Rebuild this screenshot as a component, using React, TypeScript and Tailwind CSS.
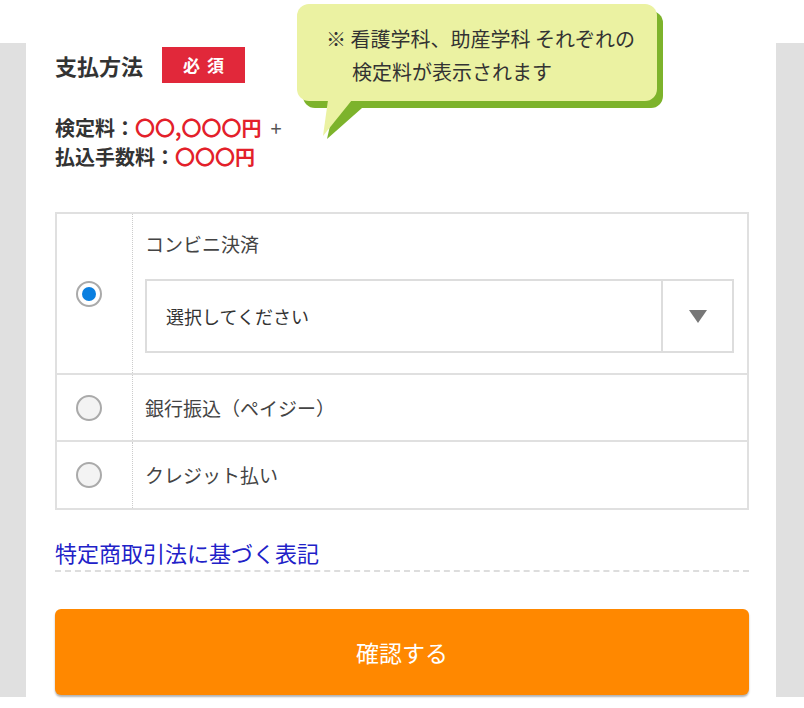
import React from "react";

const Radio = ({ checked }: { checked?: boolean }) => {
  return (
    <span
      className={
        "w-[26px] h-[26px] rounded-full border-2 border-[#aaaaaa] flex items-center justify-center " +
        (checked ? "bg-white" : "bg-[#f3f3f3]")
      }
    >
      {checked && <span className="w-[14px] h-[14px] rounded-full bg-[#0a7fe0]"></span>}
    </span>
  );
};

const Row = ({
  checked,
  label,
  className,
  children,
}: {
  checked?: boolean;
  label: string;
  className: string;
  children?: React.ReactNode;
}) => {
  return (
    <div className={"flex " + className}>
      <div className="w-[76px] shrink-0 flex items-center pl-[19px] border-r border-dotted border-[#cccccc]">
        <Radio checked={checked} />
      </div>
      <div className={"flex-1 pl-3 pr-[13px] flex flex-col " + (children ? "pt-[14px]" : "justify-center")}>
        <p className="text-[19px] leading-8 text-[#444444]">{label}</p>
        {children}
      </div>
    </div>
  );
};

const Bubble = () => {
  return (
    <div className="absolute left-[297px] top-[4px]">
      <div className="relative w-[360px] h-[97px] rounded-[12px] bg-[#ebf2a2] shadow-[6px_7px_0_#7db32b] pl-[29px] pt-[18px] text-[20px] leading-[33px] text-[#333333] z-10">
        <p>※ 看護学科、助産学科 それぞれの</p>
        <p className="pl-[26px]">検定料が表示されます</p>
      </div>
      <svg className="absolute left-[20px] top-[90px] z-20" width="48" height="50" viewBox="0 0 48 50">
        <polygon points="17,14 45,14 10,45" fill="#7db32b" />
        <polygon points="11,6 35,6 6,42" fill="#ebf2a2" />
      </svg>
    </div>
  );
};

export default function App() {
  return (
    <div className="relative w-full min-h-[708px] bg-white font-['Noto_Sans_CJK_JP','Noto_Sans',sans-serif]">
      <div className="h-[43px]"></div>
      <div className="flex bg-[#e0e0e0]">
        <div className="w-[26px] shrink-0"></div>
        <div className="flex-1 bg-white pl-[29px] pr-[27px] pt-[4px] pb-[2px]">
          <div className="flex items-center gap-[19px]">
            <h2 className="text-[22px] font-bold text-[#333333] leading-9">支払方法</h2>
            <span className="w-[83px] h-[36px] bg-[#e1283a] text-white text-[17px] font-bold flex items-center justify-center tracking-[7px] pl-[7px]">
              必須
            </span>
          </div>

          <div className="mt-[30px] text-[20px] font-bold leading-[29px] text-[#333333]">
            <p>
              検定料：<span className="text-[#e3202a]">〇〇,〇〇〇円</span>
              <span className="ml-[9px] font-normal text-[#555555]">+</span>
            </p>
            <p>
              払込手数料：<span className="text-[#e3202a]">〇〇〇円</span>
            </p>
          </div>

          <div className="mt-[41px] border-2 border-[#e0e0e0]">
            <Row checked label="コンビニ決済" className="h-[159px]">
              <div className="mt-[19px] h-[74px] border-2 border-[#dddddd] flex">
                <div className="flex-1 flex items-center pl-[19px] text-[18px] text-[#333333]">選択してください</div>
                <div className="w-[71px] border-l-2 border-[#dddddd] flex items-center justify-center">
                  <svg width="18" height="13" viewBox="0 0 18 13">
                    <polygon points="0,0 18,0 9,13" fill="#777777" />
                  </svg>
                </div>
              </div>
            </Row>
            <Row label="銀行振込（ペイジー）" className="h-[67px] border-t-2 border-[#e0e0e0]" />
            <Row label="クレジット払い" className="h-[68px] border-t-2 border-[#e0e0e0]" />
          </div>

          <div className="mt-[27px] pb-[3px] border-b-2 border-dashed border-[#dddddd]">
            <a className="text-[22px] leading-[30px] text-[#2121c8]">特定商取引法に基づく表記</a>
          </div>

          <button className="mt-[37px] w-full h-[86px] rounded-md bg-[#ff8800] text-white text-[23px] shadow-[0_2px_2px_rgba(0,0,0,0.3)]">
            確認する
          </button>
        </div>
        <div className="w-[28px] shrink-0"></div>
      </div>
      <Bubble />
    </div>
  );
}
